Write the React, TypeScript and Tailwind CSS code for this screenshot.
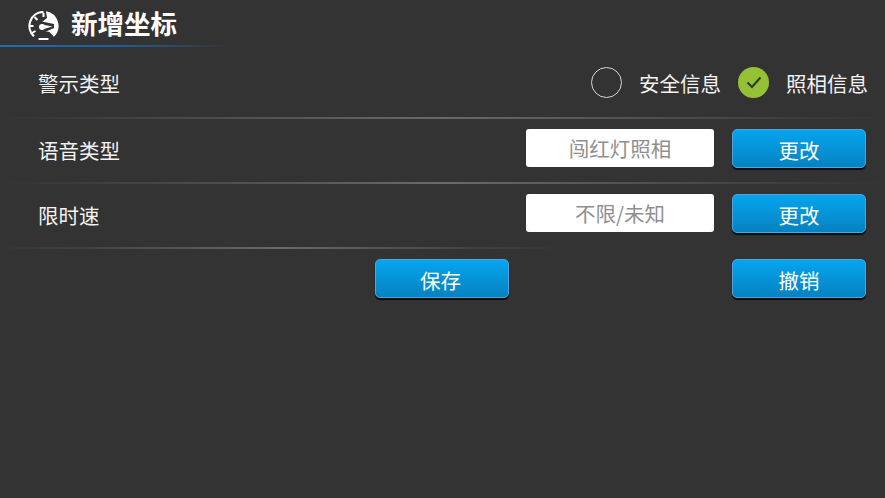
const font = "font-['Noto_Sans_CJK_SC',sans-serif]";

function Btn({ children, shift }: { children: string; shift?: boolean }) {
  return (
    <button className={`flex h-[39px] w-[134px] items-center justify-center rounded-[5px] border border-[#4fa3df] bg-gradient-to-b from-[#04a5ef] to-[#0682c0] pt-[3px] text-[20.5px] leading-none text-white shadow-[0_2px_1px_#0c0c0c] ${shift ? "pr-[3px]" : ""}`}>
      {children}
    </button>
  );
}

function Field({ children }: { children: string }) {
  return (
    <div className="flex h-[38px] w-[188px] items-center justify-center rounded-[3px] bg-white text-[20.5px] leading-none text-[#8f8f8f]">
      {children}
    </div>
  );
}

function Gauge() {
  return (
    <svg width="32" height="30" viewBox="0 0 32 30" fill="none" className="mt-[7px]">
      <path d="M6 25.3 A14 14 0 0 1 15.5 1" stroke="#fff" strokeWidth="2.2" />
      <path d="M6.5 6 L9.5 9 M2 15 H5.5 M4 22 L7.5 20 M15.5 2 V6" stroke="#fff" strokeWidth="2" />
      <path d="M18 0.2 A15 15 0 0 1 26 25.7 L21.5 21 L16 20 L14 11 L19 7 Z" fill="#fff" />
      <path d="M14 10.5 L26 13 L26 17 L17 21 L12 17 Z" fill="#333" />
      <circle cx="14" cy="16" r="3" fill="#fff" />
      <path d="M14 13.5 L24.5 15.5 L14 18.5 Z" fill="#fff" />
      <path d="M10.5 28 H20.5" stroke="#fff" strokeWidth="2" />
    </svg>
  );
}

export default function App() {
  return (
    <div className={`h-[498px] w-[885px] overflow-hidden bg-[#333333] text-[#f2f2f2] ${font}`}>
      <header className="flex h-[45px] items-center gap-[11px] pl-[28px]">
        <Gauge />
        <h1 className="mt-[2px] text-[26.5px] leading-none font-bold text-white">新增坐标</h1>
      </header>
      <div className="h-[2px] w-[230px] bg-gradient-to-r from-[#1e6fb4] via-[#1b5f9a] to-[#333333]" />

      <div className="flex h-[70px] items-center justify-between pr-[17px] pl-[38px]">
        <span className="mt-[2px] text-[20.5px] leading-none">警示类型</span>
        <div className="flex items-center text-[20.5px] leading-none">
          <span className="h-[31px] w-[31px] rounded-full border-[1.5px] border-[#d6d6d6]" />
          <span className="mt-[2px] ml-[17px]">安全信息</span>
          <span className="ml-[17px] flex h-[31px] w-[31px] items-center justify-center rounded-full bg-[#95c136]">
            <svg width="18" height="18" viewBox="0 0 18 18" fill="none">
              <path d="M2.5 9.5 L7 14 L15.5 4.5" stroke="#2f3a22" strokeWidth="2" />
            </svg>
          </span>
          <span className="mt-[2px] ml-[17px]">照相信息</span>
        </div>
      </div>
      <div className="h-[2px] bg-gradient-to-r from-[#333333] via-[#6a6a6a] to-[#333333]" />

      <div className="flex h-[63px] items-start pt-[10px] pr-[19px] pl-[38px]">
        <span className="mt-[11px] flex-1 text-[20.5px] leading-none">语音类型</span>
        <Field>闯红灯照相</Field>
        <div className="ml-[18px]"><Btn>更改</Btn></div>
      </div>
      <div className="h-[2px] bg-gradient-to-r from-[#333333] via-[#6a6a6a] to-[#333333]" />

      <div className="flex h-[63px] items-start pt-[10px] pr-[19px] pl-[38px]">
        <span className="mt-[11px] flex-1 text-[20.5px] leading-none">限时速</span>
        <Field>不限/未知</Field>
        <div className="ml-[18px]"><Btn>更改</Btn></div>
      </div>
      <div className="h-[2px] w-[560px] bg-gradient-to-r from-[#333333] via-[#6a6a6a] to-[#333333]" />

      <div className="flex h-[63px] items-start pt-[10px] pr-[19px] pl-[375px]">
        <Btn shift>保存</Btn>
        <div className="ml-auto"><Btn>撤销</Btn></div>
      </div>
    </div>
  );
}
